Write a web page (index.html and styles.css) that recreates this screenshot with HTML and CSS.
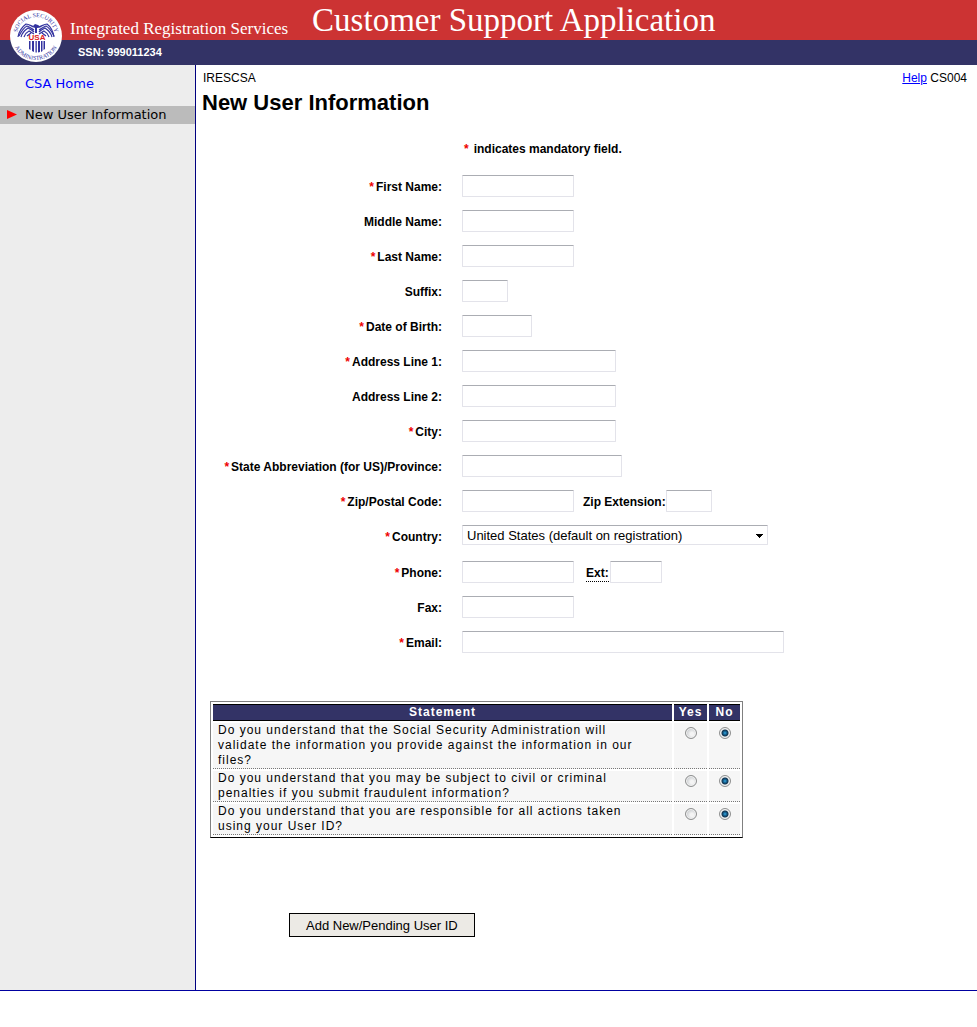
FILE: index.html
```html
<!DOCTYPE html>
<html lang="en">
<head>
<meta charset="utf-8">
<meta name="viewport" content="width=device-width, initial-scale=1">
<title>Customer Support Application - New User Information</title>
<link rel="stylesheet" href="styles.css">
</head>
<body>
<header class="banner">
  <svg class="seal" viewBox="0 0 52 52" role="img" aria-label="Social Security Administration">
    <defs>
      <path id="arc-top" d="M7 26a19 19 0 0 1 38 0"/>
      <path id="arc-bottom" d="M2 26a24 24 0 0 0 48 0"/>
    </defs>
    <circle cx="26" cy="26" r="26" fill="#fff"/>
    <text class="seal-ring"><textPath href="#arc-top" startOffset="50%">SOCIAL SECURITY</textPath></text>
    <text class="seal-ring"><textPath href="#arc-bottom" startOffset="50%">ADMINISTRATION</textPath></text>
    <g fill="none" stroke="#33339f" stroke-width="1.200">
      <path d="M8 27c1-6 4-10 8-13 3 0 5 2 8 3h5c3-1 5-3 8-3 4 3 6 7 7 13"/>
      <path d="M9 26c2-4 4-8 8-10 3 1 5 3 7 4M11 27c1-4 4-7 7-9 2 1 4 2 6 4M14 27c1-3 3-5 5-6l5 3M17 26l4-3"/>
      <path d="M44 26c-2-4-4-8-8-10-3 1-5 3-7 4M42 27c-1-4-4-7-7-9-2 1-4 2-6 4M39 27c-1-3-3-5-5-6l-5 3M36 26l-4-3"/>
    </g>
    <path d="M23 16l2-2 3 1 3 2-4 1v5h-2v-5z" fill="#33339f"/>
    <path d="M19 31h1.500v9l-1.500-1zM22 31h2v11l-2-1zM25.500 31h1.300v11.500h-1.300zM28 31h2v11l-2 .5zM31 31h1.500v10l-1.500 1zM33.500 31h1.500v8l-1.500 1z" fill="#33339f"/>
    <text class="seal-usa" x="27" y="30">USA</text>
  </svg>
  <div class="banner-top">
    <div class="service">Integrated Registration Services</div>
    <div class="app-title">Customer Support Application</div>
  </div>
  <div class="banner-sub">SSN: 999011234</div>
</header>
<div class="page">
  <nav class="side" aria-label="Main">
    <a class="side-item" href="#">CSA Home</a>
    <div class="side-item current" aria-current="page"><svg class="arrow" viewBox="0 0 10 10" aria-hidden="true"><path d="M0 0l10 4.500-10 4.500z" fill="#f00"/></svg>New User Information</div>
  </nav>
  <main class="main">
    <div class="topline"><span>IRESCSA</span><span><a href="#">Help</a> CS004</span></div>
    <h1 class="heading">New User Information</h1>
    <form>
      <p class="note"><span class="req">*</span>indicates mandatory field.</p>
      <div class="fields">
        <div class="row"><label for="first"><span class="req">*</span>First Name:</label><input class="w-name" id="first" type="text"></div>
        <div class="row"><label for="middle">Middle Name:</label><input class="w-name" id="middle" type="text"></div>
        <div class="row"><label for="last"><span class="req">*</span>Last Name:</label><input class="w-name" id="last" type="text"></div>
        <div class="row"><label for="suffix">Suffix:</label><input class="w-short" id="suffix" type="text"></div>
        <div class="row"><label for="dob"><span class="req">*</span>Date of Birth:</label><input class="w-date" id="dob" type="text"></div>
        <div class="row"><label for="addr1"><span class="req">*</span>Address Line 1:</label><input class="w-addr" id="addr1" type="text"></div>
        <div class="row"><label for="addr2">Address Line 2:</label><input class="w-addr" id="addr2" type="text"></div>
        <div class="row"><label for="city"><span class="req">*</span>City:</label><input class="w-addr" id="city" type="text"></div>
        <div class="row"><label for="state"><span class="req">*</span>State Abbreviation (for US)/Province:</label><input class="w-state" id="state" type="text"></div>
        <div class="row"><label for="zip"><span class="req">*</span>Zip/Postal Code:</label><div class="pair"><input class="w-name" id="zip" type="text"><label class="second" for="zipext">Zip Extension:</label><input class="w-short" id="zipext" type="text"></div></div>
        <div class="row row-select"><label for="country"><span class="req">*</span>Country:</label><select id="country"><option>United States (default on registration)</option></select></div>
        <div class="row"><label for="phone"><span class="req">*</span>Phone:</label><div class="pair"><input class="w-name" id="phone" type="text"><label class="second ext" for="ext"><abbr title="Extension">Ext:</abbr></label><input class="w-ext" id="ext" type="text"></div></div>
        <div class="row"><label for="fax">Fax:</label><input class="w-name" id="fax" type="text"></div>
        <div class="row"><label for="email"><span class="req">*</span>Email:</label><input class="w-email" id="email" type="text"></div>
      </div>
      <table class="statements">
        <thead>
          <tr><th class="statement" scope="col">Statement</th><th class="yes" scope="col">Yes</th><th class="no" scope="col">No</th></tr>
        </thead>
        <tbody>
          <tr><td>Do you understand that the Social Security Administration will validate the information you provide against the information in our files?</td><td class="choice"><input type="radio" name="q1" aria-label="Yes"></td><td class="choice"><input type="radio" name="q1" aria-label="No" checked></td></tr>
          <tr><td>Do you understand that you may be subject to civil or criminal penalties if you submit fraudulent information?</td><td class="choice"><input type="radio" name="q2" aria-label="Yes"></td><td class="choice"><input type="radio" name="q2" aria-label="No" checked></td></tr>
          <tr><td>Do you understand that you are responsible for all actions taken using your User ID?</td><td class="choice"><input type="radio" name="q3" aria-label="Yes"></td><td class="choice"><input type="radio" name="q3" aria-label="No" checked></td></tr>
        </tbody>
      </table>
      <button class="submit" type="button">Add New/Pending User ID</button>
    </form>
  </main>
</div>
</body>
</html>
```

FILE: styles.css
```css
* { box-sizing: border-box; }

body {
  margin: 0;
  background: #fff;
  color: #000;
  font: 12px/15px "Liberation Sans", Arial, sans-serif;
}

a { color: #00f; }

/* Banner */
.banner { position: relative; color: #fff; }

.banner-top {
  display: flex;
  align-items: center;
  gap: 24px;
  height: 40px;
  padding-left: 70px;
  background: #c33;
  font-family: Georgia, "Liberation Serif", serif;
  white-space: nowrap;
}

.service { padding-top: 18px; font-size: 17px; line-height: 20px; }
.app-title { font-size: 33px; line-height: 40px; }

.banner-sub {
  height: 25px;
  padding-left: 78px;
  background: #336;
  font-size: 11px;
  font-weight: bold;
  line-height: 25px;
}

.seal { position: absolute; top: 10px; left: 10px; width: 52px; height: 52px; }
.seal-ring { fill: #33339f; font: 6px "Liberation Serif", serif; text-anchor: middle; }
.seal-usa { fill: #d22; font: bold 8px "Liberation Sans", sans-serif; text-anchor: middle; }

/* Page columns */
.page {
  display: flex;
  border-bottom: 1px solid #0000a0;
}

.side {
  flex: 0 0 196px;
  padding-top: 10px;
  border-right: 1px solid #000080;
  background: #ededed;
  font: 13px/18px Verdana, "DejaVu Sans", sans-serif;
}

.side-item {
  display: flex;
  align-items: center;
  margin-bottom: 13px;
  padding-left: 25px;
  text-decoration: none;
}

.current { padding-left: 7px; background: #bbb; }
.arrow { width: 10px; height: 10px; margin-right: 8px; }

.main { flex: 1; min-width: 0; padding: 6px 10px 53px 6px; }
.topline { display: flex; justify-content: space-between; padding-left: 1px; }
.heading { margin: 4px 0 0; font-size: 22px; line-height: 25px; }

/* Form */
.note { margin: 27px 0 18px 262px; font-weight: bold; }
.note .req { margin-right: 5px; }
.req { margin-right: 2px; color: #e00; }

.fields { display: flex; flex-direction: column; gap: 13px; }

.row {
  display: grid;
  grid-template-columns: 240px 1fr;
  column-gap: 20px;
  align-items: center;
  justify-items: start;
  min-height: 22px;
  font-weight: bold;
}

.row > label { justify-self: end; padding-top: 3px; }
.row-select { align-items: start; min-height: 23px; }
.row-select > label { padding-top: 5px; }
.pair { display: flex; align-items: center; }
.second { padding: 3px 0 0 9px; }
.ext { padding: 3px 1px 0 12px; }
.ext abbr { display: block; border-bottom: 1px dotted #000; text-decoration: none; }

input[type="text"], select {
  height: 22px;
  margin: 0;
  padding: 0 3px;
  border: 1px solid #e3e3ea;
  border-top-color: #abadb3;
  border-radius: 1px;
  background: #fff;
  color: #000;
  font: 13px "Liberation Sans", Arial, sans-serif;
}

.w-name { width: 112px; }
.w-short { width: 46px; }
.w-date { width: 70px; }
.w-addr { width: 154px; }
.w-state { width: 160px; }
.w-ext { width: 52px; }
.w-email { width: 322px; }

select {
  appearance: none;
  width: 306px;
  height: 20px;
  padding: 0 4px;
  background: linear-gradient(#000, #000) right 4px top 8px / 7px 1px no-repeat,
    linear-gradient(#000, #000) right 5px top 9px / 5px 1px no-repeat,
    linear-gradient(#000, #000) right 6px top 10px / 3px 1px no-repeat,
    linear-gradient(#000, #000) right 7px top 11px / 1px 1px no-repeat, #fff;
}

/* Statements */
.statements {
  width: 533px;
  margin: 48px 0 75px 8px;
  border: 1px solid #808080;
  border-bottom-color: #000;
  border-collapse: separate;
  border-spacing: 2px;
  table-layout: fixed;
  letter-spacing: 1px;
}

.statements th {
  padding: 0;
  border: solid #000;
  border-width: 1px 0;
  background: #336;
  color: #fff;
}

.yes { width: 33px; }
.no { width: 31px; }

.statements td {
  padding: 0 25px 0 5px;
  border-bottom: 1px dotted #777;
  background: #f6f6f6;
  vertical-align: top;
}

.statements .choice { padding: 4px 0 0; text-align: center; }

input[type="radio"] {
  appearance: none;
  display: block;
  width: 12px;
  height: 12px;
  margin: 0 auto;
  border: 1px solid #8e8f8f;
  border-radius: 50%;
  background: radial-gradient(circle at 60% 60%, #f4f4f4 20%, #c8cbce 70%);
  box-shadow: inset 0 0 0 1px #f4f4f4;
}

input[type="radio"]:checked {
  background: radial-gradient(circle at 50% 50%, #4cb8e5 0, #1878b0 1px, #12344f 3px, #dfe3e6 4px);
}

.submit {
  display: block;
  height: 24px;
  margin-left: 87px;
  padding: 0 16px;
  border: 1px solid #000;
  background: #eceae5;
  color: #000;
  font: 13px "Liberation Sans", Arial, sans-serif;
}
```
